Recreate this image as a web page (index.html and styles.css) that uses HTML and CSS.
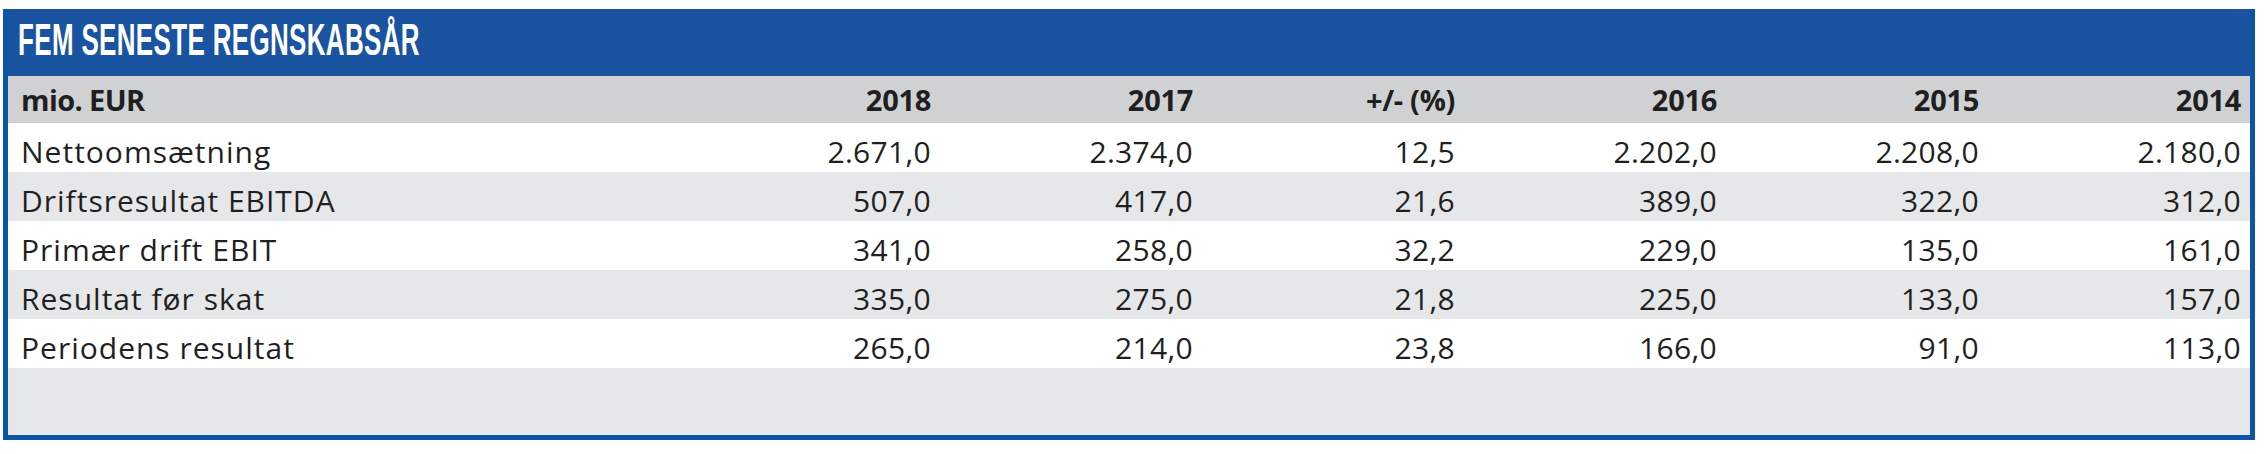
FILE: index.html
```html
<!DOCTYPE html>
<html lang="da">
<head>
<meta charset="utf-8">
<title>Fem seneste regnskabsår</title>
<link rel="stylesheet" href="styles.css">
</head>
<body>
<section class="card">
  <header class="card-title"><h2 class="card-title-text">FEM SENESTE REGNSKABSÅR</h2></header>
  <table class="fin">
    <colgroup>
      <col class="col-label">
      <col class="col-num"><col class="col-num"><col class="col-num">
      <col class="col-num"><col class="col-num"><col class="col-num">
    </colgroup>
    <thead>
      <tr class="head-row">
        <th class="label">mio. EUR</th>
        <th>2018</th><th>2017</th><th>+/- (%)</th><th>2016</th><th>2015</th><th>2014</th>
      </tr>
    </thead>
    <tbody>
      <tr class="row odd">
        <td class="label">Nettoomsætning</td>
        <td>2.671,0</td><td>2.374,0</td><td>12,5</td><td>2.202,0</td><td>2.208,0</td><td>2.180,0</td>
      </tr>
      <tr class="row even">
        <td class="label">Driftsresultat EBITDA</td>
        <td>507,0</td><td>417,0</td><td>21,6</td><td>389,0</td><td>322,0</td><td>312,0</td>
      </tr>
      <tr class="row odd">
        <td class="label">Primær drift EBIT</td>
        <td>341,0</td><td>258,0</td><td>32,2</td><td>229,0</td><td>135,0</td><td>161,0</td>
      </tr>
      <tr class="row even">
        <td class="label">Resultat før skat</td>
        <td>335,0</td><td>275,0</td><td>21,8</td><td>225,0</td><td>133,0</td><td>157,0</td>
      </tr>
      <tr class="row odd">
        <td class="label">Periodens resultat</td>
        <td>265,0</td><td>214,0</td><td>23,8</td><td>166,0</td><td>91,0</td><td>113,0</td>
      </tr>
      <tr class="row filler">
        <td colspan="7"></td>
      </tr>
    </tbody>
  </table>
</section>
</body>
</html>
```
FILE: styles.css
```css
html, body {
  margin: 0;
  padding: 0;
  background: #ffffff;
}

body {
  padding: 9px 9px 0 3px;
  font-family: "Open Sans", "Noto Sans", "Liberation Sans", sans-serif;
  color: #1f1f1f;
}

.card {
  border: 5px solid #0c55a6;
  border-top: 0;
  background: #e6e7e8;
}

.card-title {
  height: 67px;
  background: #1a53a0;
  display: flex;
  align-items: flex-start;
  padding-left: 10px;
  box-sizing: border-box;
  overflow: hidden;
}

.card-title-text {
  margin: 0;
  font-family: "Liberation Sans", "Arial", sans-serif;
  font-weight: 700;
  font-size: 44px;
  line-height: 1;
  color: #ffffff;
  white-space: nowrap;
  transform: scaleX(0.59);
  transform-origin: left top;
  padding-top: 9px;
  letter-spacing: 0.6px;
}

.fin {
  width: 100%;
  border-collapse: collapse;
  table-layout: fixed;
}

.col-num {
  width: 262px;
}

.fin th,
.fin td {
  padding: 0 9px 0 0;
  text-align: right;
  white-space: nowrap;
  vertical-align: top;
}

.fin .label {
  text-align: left;
  padding-left: 13px;
}

.head-row {
  background: #d0d1d3;
}

.head-row th {
  height: 47px;
  box-sizing: border-box;
  padding-top: 4px;
  font-size: 29px;
  font-weight: 700;
  line-height: 40px;
  letter-spacing: -0.3px;
}

.head-row th.label {
  letter-spacing: -0.6px;
}

.row td {
  height: 49px;
  box-sizing: border-box;
  padding-top: 8px;
  font-size: 30px;
  font-weight: 400;
  line-height: 41px;
  letter-spacing: 0.3px;
}

.row td.label {
  letter-spacing: 1px;
}

.row.odd {
  background: #ffffff;
}

.row.even {
  background: #e6e7e8;
}

.row.filler td {
  height: 67px;
  background: #e6e7e8;
  padding: 0;
}
```
